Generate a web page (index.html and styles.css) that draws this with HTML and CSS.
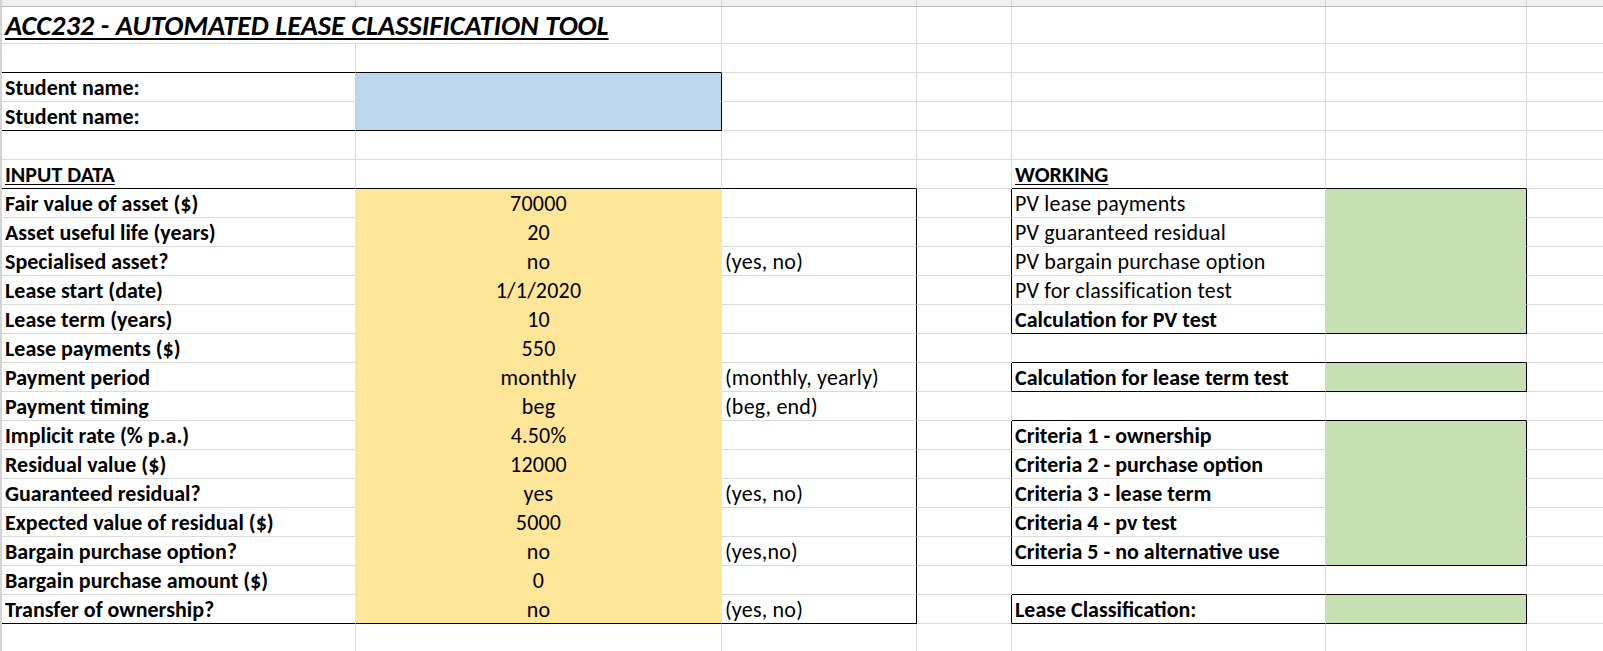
FILE: index.html
```html
<!DOCTYPE html>
<html lang="en">
<head>
<meta charset="utf-8">
<title>ACC232 - Automated Lease Classification Tool</title>
<link rel="stylesheet" href="styles.css">
</head>
<body>
<div class="sheet">
  <div class="hdr">
    <div class="h ca"></div>
    <div class="h cb"></div>
    <div class="h cc"></div>
    <div class="h cd"></div>
    <div class="h ce"></div>
    <div class="h cf"></div>
    <div class="h cg"></div>
  </div>

  <div class="row r1">
    <div class="c cab tc"><span class="title">ACC232 - AUTOMATED LEASE CLASSIFICATION TOOL</span></div>
    <div class="c cc"></div><div class="c cd"></div><div class="c ce"></div><div class="c cf"></div><div class="c cg"></div>
  </div>

  <div class="row">
    <div class="c ca k-b"></div><div class="c cb k-b"></div>
    <div class="c cc"></div><div class="c cd"></div><div class="c ce"></div><div class="c cf"></div><div class="c cg"></div>
  </div>

  <div class="row">
    <div class="c ca bd b-r">Student name:</div><div class="c cb b k-r"></div>
    <div class="c cc"></div><div class="c cd"></div><div class="c ce"></div><div class="c cf"></div><div class="c cg"></div>
  </div>

  <div class="row">
    <div class="c ca bd b-r k-b">Student name:</div><div class="c cb b k-r k-b"></div>
    <div class="c cc"></div><div class="c cd"></div><div class="c ce"></div><div class="c cf"></div><div class="c cg"></div>
  </div>

  <div class="row">
    <div class="c ca"></div><div class="c cb"></div>
    <div class="c cc"></div><div class="c cd"></div><div class="c ce"></div><div class="c cf"></div><div class="c cg"></div>
  </div>

  <div class="row">
    <div class="c ca bd k-b"><span class="ul">INPUT DATA</span></div><div class="c cb k-b"></div><div class="c cc k-b"></div>
    <div class="c cd"></div>
    <div class="c ce bd k-b"><span class="ul">WORKING</span></div><div class="c cf k-b"></div><div class="c cg"></div>
  </div>

  <div class="row">
    <div class="c ca bd y-r">Fair value of asset ($)</div><div class="c cb y ctr">70000</div><div class="c cc k-r"></div>
    <div class="c cd k-r"></div>
    <div class="c ce g-r">PV lease payments</div><div class="c cf g k-r"></div><div class="c cg"></div>
  </div>

  <div class="row">
    <div class="c ca bd y-r">Asset useful life (years)</div><div class="c cb y ctr">20</div><div class="c cc k-r"></div>
    <div class="c cd k-r"></div>
    <div class="c ce g-r">PV guaranteed residual</div><div class="c cf g k-r"></div><div class="c cg"></div>
  </div>

  <div class="row">
    <div class="c ca bd y-r">Specialised asset?</div><div class="c cb y ctr">no</div><div class="c cc k-r">(yes, no)</div>
    <div class="c cd k-r"></div>
    <div class="c ce g-r">PV bargain purchase option</div><div class="c cf g k-r"></div><div class="c cg"></div>
  </div>

  <div class="row">
    <div class="c ca bd y-r">Lease start (date)</div><div class="c cb y ctr">1/1/2020</div><div class="c cc k-r"></div>
    <div class="c cd k-r"></div>
    <div class="c ce g-r">PV for classification test</div><div class="c cf g k-r"></div><div class="c cg"></div>
  </div>

  <div class="row">
    <div class="c ca bd y-r">Lease term (years)</div><div class="c cb y ctr">10</div><div class="c cc k-r"></div>
    <div class="c cd k-r"></div>
    <div class="c ce bd g-r k-b">Calculation for PV test</div><div class="c cf g k-r k-b"></div><div class="c cg"></div>
  </div>

  <div class="row">
    <div class="c ca bd y-r">Lease payments ($)</div><div class="c cb y ctr">550</div><div class="c cc k-r"></div>
    <div class="c cd"></div>
    <div class="c ce k-b"></div><div class="c cf k-b"></div><div class="c cg"></div>
  </div>

  <div class="row">
    <div class="c ca bd y-r">Payment period</div><div class="c cb y ctr">monthly</div><div class="c cc k-r">(monthly, yearly)</div>
    <div class="c cd k-r"></div>
    <div class="c ce bd g-r k-b">Calculation for lease term test</div><div class="c cf g k-r k-b"></div><div class="c cg"></div>
  </div>

  <div class="row">
    <div class="c ca bd y-r">Payment timing</div><div class="c cb y ctr">beg</div><div class="c cc k-r">(beg, end)</div>
    <div class="c cd"></div>
    <div class="c ce k-b"></div><div class="c cf k-b"></div><div class="c cg"></div>
  </div>

  <div class="row">
    <div class="c ca bd y-r">Implicit rate (% p.a.)</div><div class="c cb y ctr">4.50%</div><div class="c cc k-r"></div>
    <div class="c cd k-r"></div>
    <div class="c ce bd g-r">Criteria 1 - ownership</div><div class="c cf g k-r"></div><div class="c cg"></div>
  </div>

  <div class="row">
    <div class="c ca bd y-r">Residual value ($)</div><div class="c cb y ctr">12000</div><div class="c cc k-r"></div>
    <div class="c cd k-r"></div>
    <div class="c ce bd g-r">Criteria 2 - purchase option</div><div class="c cf g k-r"></div><div class="c cg"></div>
  </div>

  <div class="row">
    <div class="c ca bd y-r">Guaranteed residual?</div><div class="c cb y ctr">yes</div><div class="c cc k-r">(yes, no)</div>
    <div class="c cd k-r"></div>
    <div class="c ce bd g-r">Criteria 3 - lease term</div><div class="c cf g k-r"></div><div class="c cg"></div>
  </div>

  <div class="row">
    <div class="c ca bd y-r">Expected value of residual ($)</div><div class="c cb y ctr">5000</div><div class="c cc k-r"></div>
    <div class="c cd k-r"></div>
    <div class="c ce bd g-r">Criteria 4 - pv test</div><div class="c cf g k-r"></div><div class="c cg"></div>
  </div>

  <div class="row">
    <div class="c ca bd y-r">Bargain purchase option?</div><div class="c cb y ctr">no</div><div class="c cc k-r">(yes,no)</div>
    <div class="c cd k-r"></div>
    <div class="c ce bd g-r k-b">Criteria 5 - no alternative use</div><div class="c cf g k-r k-b"></div><div class="c cg"></div>
  </div>

  <div class="row">
    <div class="c ca bd y-r">Bargain purchase amount ($)</div><div class="c cb y ctr">0</div><div class="c cc k-r"></div>
    <div class="c cd"></div>
    <div class="c ce k-b"></div><div class="c cf k-b"></div><div class="c cg"></div>
  </div>

  <div class="row">
    <div class="c ca bd y-r k-b">Transfer of ownership?</div><div class="c cb y ctr k-b">no</div><div class="c cc k-r k-b">(yes, no)</div>
    <div class="c cd k-r"></div>
    <div class="c ce bd g-r k-b">Lease Classification:</div><div class="c cf g k-r k-b"></div><div class="c cg"></div>
  </div>

  <div class="row">
    <div class="c ca"></div><div class="c cb"></div>
    <div class="c cc"></div><div class="c cd"></div><div class="c ce"></div><div class="c cf"></div><div class="c cg"></div>
  </div>
</div>
</body>
</html>
```
FILE: styles.css
```css
:root {
  --grid: #dadada;
  --yellow: #ffe699;
  --blue: #bdd7ee;
  --green: #c6e0b4;
}
* { box-sizing: border-box; }
html, body { margin: 0; padding: 0; overflow: hidden; background: #fff; }
body {
  font-family: "Carlito", "Calibri", "Lato", sans-serif;
  font-size: 22px;
  color: #000;
}
.sheet {
  width: 1603px;
  height: 651px;
  overflow: hidden;
  border-left: 2px solid #d4d4d4;
}

/* column header strip (cut off at the top) */
.hdr {
  display: flex;
  height: 7px;
  background: #efefef;
  border-bottom: 1px solid #b7b7b7;
}
.h {
  flex: none;
  height: 6px;
  border-right: 1px solid #d4d4d4;
}

/* rows and cells */
.row { display: flex; height: 29px; }
.row.r1 { height: 37px; }
.c {
  flex: none;
  height: 100%;
  display: flex;
  align-items: flex-end;
  padding-left: 3px;
  padding-bottom: 2px;
  white-space: nowrap;
  line-height: 22px;
  letter-spacing: 0.2px;
  border-right: 1px solid var(--grid);
  border-bottom: 1px solid var(--grid);
}
.ca { width: 354px; }
.cb { width: 366px; }
.cc { width: 195px; }
.cd { width: 95px; }
.ce { width: 314px; }
.cf { width: 201px; }
.cg { width: 110px; }
.cab { width: 720px; }
.tc { padding-bottom: 3px; }

.bd { font-weight: 700; letter-spacing: 0; }
.ctr { justify-content: center; padding-left: 0; }

.title {
  font-size: 28.4px;
  line-height: 28.4px;
  font-weight: 700;
  font-style: italic;
  letter-spacing: 0;
  text-decoration: underline;
  text-decoration-thickness: 2px;
  text-underline-offset: 3px;
}
.ul {
  text-decoration: underline;
  text-decoration-thickness: 1px;
  text-underline-offset: 2px;
}

/* fills (fill hides the gridlines around the cell) */
.y { background: var(--yellow); border-right-color: var(--yellow); border-bottom-color: var(--yellow); }
.b { background: var(--blue); border-right-color: var(--blue); border-bottom-color: var(--blue); }
.g { background: var(--green); border-right-color: var(--green); border-bottom-color: var(--green); }
.y-r { border-right-color: var(--yellow); }
.b-r { border-right-color: var(--blue); }
.g-r { border-right-color: var(--green); }

/* black thin cell borders */
.k-b { border-bottom-color: #000; }
.k-r { border-right-color: #000; }
```
